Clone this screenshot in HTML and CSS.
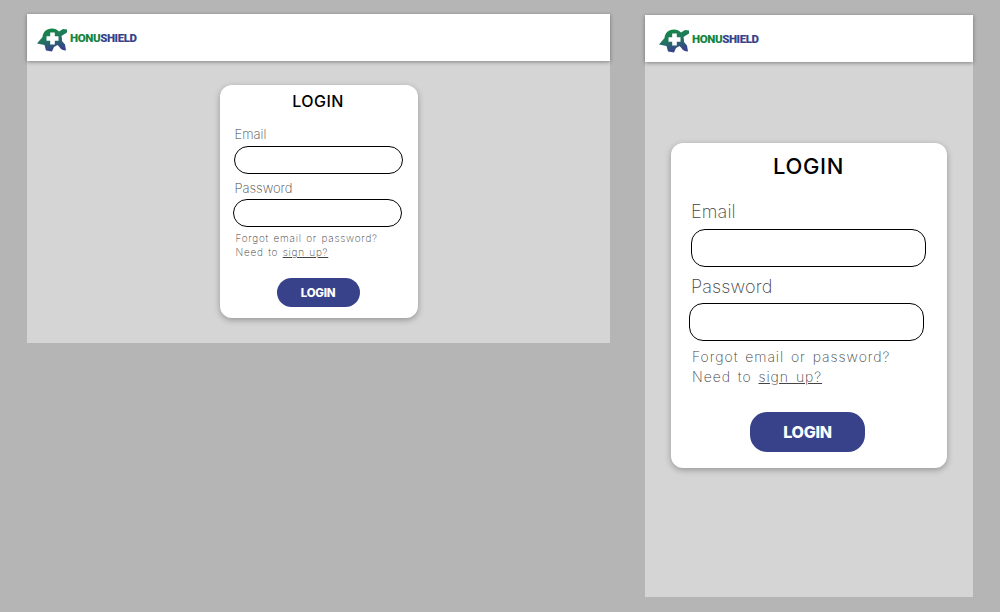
FILE: index.html
```html
<!DOCTYPE html>
<html lang="en">
<head>
<meta charset="utf-8">
<title>HonuShield login</title>
<link rel="stylesheet" href="styles.css">
</head>
<body>
<svg width="0" height="0" class="defs" aria-hidden="true">
  <defs>
    <linearGradient id="shell" x1="0" y1="0" x2="0.35" y2="1">
      <stop offset="0" stop-color="#0f8a3c"/>
      <stop offset="0.5" stop-color="#1f7a5c"/>
      <stop offset="1" stop-color="#38428a"/>
    </linearGradient>
    <symbol id="turtle" viewBox="0 0 32 28">
      <path fill="url(#shell)" d="M0 19.5 C2 17 4 15 5.5 13 C6 8.5 9 4.5 15 4.5 C18 4.5 20 5.5 22 7.5 L26 5 L30 5.5 L30 8.5 L26 11 L24.5 12 C25 14 25 15.5 25 17 L28 20.5 L29 26.5 C26 26.5 24 25.5 22 22.5 L20.5 21 L17 23 L15 27.5 L9 26.5 L7.5 21 L5 20.5 Z"/>
      <path fill="#fff" d="M13.2 8.5 H17.8 V12.3 H21.5 V16.7 H17.8 V20.5 H13.2 V16.7 H9.5 V12.3 H13.2 Z"/>
    </symbol>
  </defs>
</svg>
<main class="board">
  <section class="frame frame-desktop">
    <header class="topbar">
      <div class="brand">
        <svg class="turtle" aria-hidden="true"><use href="#turtle"/></svg>
        <span class="wordmark"><span class="honu">HONU</span><span class="shield">SHIELD</span></span>
      </div>
    </header>
    <div class="stage">
      <form class="card">
        <h1 class="title">LOGIN</h1>
        <label class="label label-email">Email</label>
        <div class="field"></div>
        <label class="label label-pass">Password</label>
        <div class="field field-pass"></div>
        <p class="help">Forgot email or password?<br>Need to <a class="link">sign up?</a></p>
        <div class="actions"><span class="btn">LOGIN</span></div>
      </form>
    </div>
  </section>
  <section class="frame frame-mobile">
    <header class="topbar">
      <div class="brand">
        <svg class="turtle" aria-hidden="true"><use href="#turtle"/></svg>
        <span class="wordmark"><span class="honu">HONU</span><span class="shield">SHIELD</span></span>
      </div>
    </header>
    <div class="stage">
      <form class="card">
        <h1 class="title">LOGIN</h1>
        <label class="label label-email">Email</label>
        <div class="field"></div>
        <label class="label label-pass">Password</label>
        <div class="field field-pass"></div>
        <p class="help">Forgot email or password?<br>Need to <a class="link">sign up?</a></p>
        <div class="actions"><span class="btn">LOGIN</span></div>
      </form>
    </div>
  </section>
</main>
</body>
</html>
```
FILE: styles.css
```css
* { box-sizing: border-box; }
html, body { margin: 0; height: 100%; }
body { background: #b5b5b5; font-family: "Inter", "Liberation Sans", sans-serif; overflow: hidden; }
.defs { position: absolute; }
.board { display: flex; align-items: flex-start; gap: 35px; padding: 14px 0 0 27px; }
.frame { display: flex; flex-direction: column; background: #d5d5d5; }
.frame-desktop { width: 583px; height: 329px; }
.frame-mobile { width: 328px; height: 582px; margin-top: 1px; }
.topbar { height: 47px; flex: none; background: #fff; box-shadow: 0 1px 4px rgba(0,0,0,.4); display: flex; align-items: center; }
.brand { display: flex; align-items: center; }
.frame-desktop .brand { padding-left: 10px; }
.frame-mobile .brand { padding-left: 14px; }
.turtle { width: 32px; height: 28px; display: block; }
.wordmark { font-family: "Roboto", sans-serif; font-weight: 900; font-size: 11.5px; letter-spacing: -0.4px; margin-left: 1px; }
.honu { color: #14843f; }
.shield { color: #38428a; }
.stage { flex: 1; display: flex; justify-content: center; }
.frame-mobile .stage { padding-top: 81px; }
.frame-desktop .stage { padding-top: 24px; }
.card { background: #fff; display: flex; flex-direction: column; box-shadow: 0 2px 6px rgba(0,0,0,.3); }
.frame-desktop .card { width: 198px; height: 233px; border-radius: 12px; padding: 7px 15px 0 14px; }
.frame-mobile .card { width: 276px; height: 325px; border-radius: 12px; padding: 10px 21px 0 20px; }
.title { margin: 0; text-align: center; color: #000; font-weight: 500; }
.frame-desktop .title { font-size: 16px; line-height: 19px; letter-spacing: .4px; }
.frame-mobile .title { font-size: 22px; line-height: 27px; letter-spacing: .6px; }
.label { color: #444; font-weight: 200; display: block; }
.frame-desktop .label { font-size: 13px; line-height: 16px; padding-left: 1px; }
.frame-mobile .label { font-size: 18px; line-height: 22px; letter-spacing: .15px; }
.frame-desktop .label-email { margin-top: 15px; }
.frame-desktop .label-pass { margin-top: 6px; }
.frame-mobile .label-email { margin-top: 21px; }
.frame-mobile .label-pass { margin-top: 9px; }
.field { border: 1px solid #000; background: #fff; }
.frame-desktop .field { height: 28px; width: 169px; border-radius: 14px; margin-top: 4px; }
.frame-desktop .field-pass { margin-left: -1px; margin-top: 3px; }
.frame-mobile .field { height: 38px; width: 235px; border-radius: 14px; margin-top: 6px; }
.frame-mobile .field-pass { margin-left: -2px; margin-top: 5px; }
.help { margin: 0; color: #444; font-weight: 200; }
.frame-desktop .help { font-size: 10px; line-height: 14px; letter-spacing: .75px; word-spacing: 1px; margin-top: 4px; padding-left: 2px; }
.frame-mobile .help { font-size: 14px; line-height: 20px; letter-spacing: .95px; word-spacing: 2px; margin-top: 6px; padding-left: 1px; }
.link { text-decoration: underline; }
.actions { display: flex; justify-content: center; }
.frame-desktop .actions { margin-top: 19px; }
.frame-mobile .actions { margin-top: 25px; margin-right: 2px; }
.btn { background: #38428a; color: #fff; font-weight: 800; display: flex; align-items: center; justify-content: center; }
.frame-desktop .btn { width: 83px; height: 29px; border-radius: 14.5px; font-size: 11.5px; letter-spacing: -.3px; }
.frame-mobile .btn { width: 115px; height: 40px; border-radius: 17px; font-size: 16px; letter-spacing: -.3px; }
```
